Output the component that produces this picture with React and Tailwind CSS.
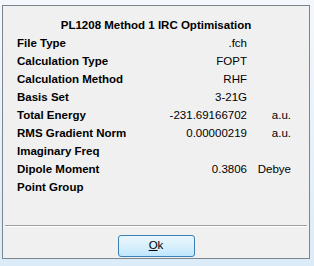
import React from "react";

const rows = [
  ["File Type", ".fch", ""],
  ["Calculation Type", "FOPT", ""],
  ["Calculation Method", "RHF", ""],
  ["Basis Set", "3-21G", ""],
  ["Total Energy", "-231.69166702", "a.u."],
  ["RMS Gradient Norm", "0.00000219", "a.u."],
  ["Imaginary Freq", "", ""],
  ["Dipole Moment", "0.3806", "Debye"],
  ["Point Group", "", ""],
];

export default function App() {
  return (
    <div
      className="w-[314px] h-[266px] bg-gradient-to-b from-[#f4f8fc] to-[#dcebf8] pl-[2px] pt-[5px] pr-[4px] pb-[7px] text-black"
      style={{ fontFamily: '"Liberation Sans", Arial, sans-serif' }}
    >
      <div className="h-full border border-[#7a8590] bg-[#f0f0f0] flex flex-col">
        <div className="pt-[10px] h-[29px] leading-[19px] text-center font-bold text-[11.5px]">
          PL1208 Method 1 IRC Optimisation
        </div>
        <div className="flex flex-col">
          {rows.map(([l, v, u]) => (
            <div key={l} className="flex h-[18px] items-center pl-[14px] text-[11.5px]">
              <div className="w-[150px] font-bold">{l}</div>
              <div className="w-[80px] text-right">{v}</div>
              <div className="w-[44px] text-right">{u}</div>
            </div>
          ))}
        </div>
        <div className="flex-1" />
        <div className="mx-[2px] h-[2px] border-t border-[#a0a0a0] border-b border-b-white" />
        <div className="pt-[8px] flex justify-center">
          <button className="w-[77px] h-[22px] rounded-[3px] border border-[#3c7fb1] bg-gradient-to-b from-[#eaf6fd] via-[#d9f0fc] to-[#bee6fd] text-[11.5px] leading-none">
            <span className="underline">O</span>k
          </button>
        </div>
        <div className="h-[1px]" />
      </div>
    </div>
  );
}
